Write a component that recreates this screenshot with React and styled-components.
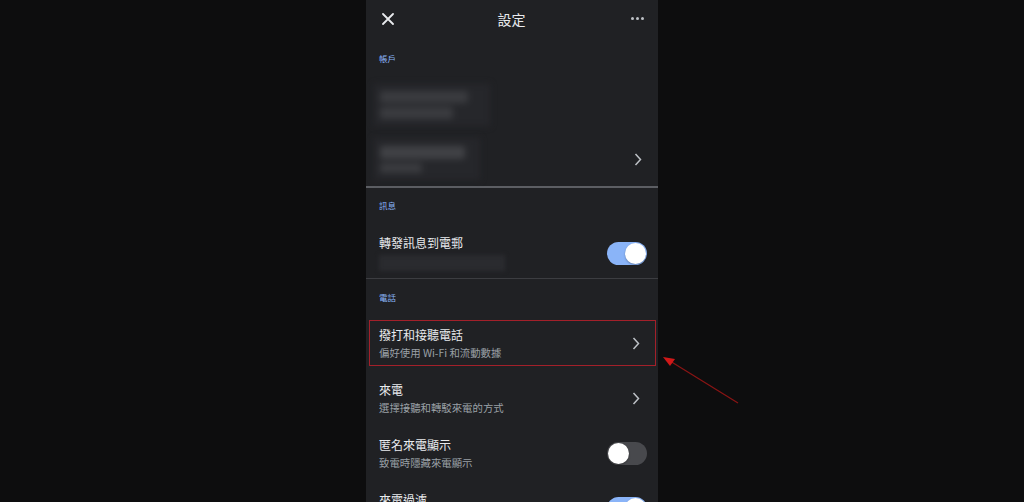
import React from 'react'
import styled, { createGlobalStyle } from 'styled-components'

const GlobalStyle = createGlobalStyle`
  html, body {
    margin: 0;
    padding: 0;
    background: #0d0d0e;
    overflow: hidden;
  }
  body {
    font-family: "Noto Sans CJK TC", "Noto Sans", "Liberation Sans", sans-serif;
  }
`

const Page = styled.div`
  position: relative;
  display: flex;
  justify-content: center;
  width: 1024px;
  height: 502px;
  overflow: hidden;
`

const Panel = styled.div`
  width: 292px;
  height: 502px;
  background: #202124;
  overflow: hidden;
  flex-shrink: 0;
`

const Header = styled.div`
  height: 37px;
  display: flex;
  align-items: center;
  justify-content: space-between;
  padding: 0 14px 0 16px;
  box-sizing: border-box;
`

const Title = styled.div`
  font-size: 14px;
  color: #e8eaed;
  line-height: 18px;
  margin-left: -2px;
`

const IconBtn = styled.div`
  width: 12px;
  height: 12px;
  display: flex;
  align-items: center;
  justify-content: center;
`

const Dots = styled.div`
  display: flex;
  gap: 2px;
  span {
    width: 3px;
    height: 3px;
    border-radius: 50%;
    background: #bdc1c6;
  }
`

const SectionLabel = styled.div`
  font-size: 8.5px;
  line-height: 12px;
  height: 12px;
  color: #8ab4f8;
  padding: 0 13px;
  margin-top: ${p => p.$top}px;
`

const AccountRow = styled.div`
  display: flex;
  align-items: center;
  justify-content: space-between;
  height: ${p => p.$h}px;
  padding: ${p => p.$pt}px 9px ${p => p.$pb}px 8px;
  box-sizing: border-box;
`

const BlurBox = styled.div`
  width: ${p => p.$w}px;
  height: 42px;
  display: flex;
  flex-direction: column;
  gap: 4px;
  justify-content: center;
  padding: 4px 6px;
  box-sizing: border-box;
  background: #26272b;
  filter: blur(3px);
`

const BlurBar = styled.div`
  height: ${p => p.$h}px;
  width: ${p => p.$w}%;
  background: ${p => p.$c || '#3a3b3f'};
  border-radius: 3px;
`

const Divider = styled.div`
  height: ${p => p.$h}px;
  background: ${p => p.$c};
`

const ToggleRow = styled.div`
  display: flex;
  align-items: center;
  justify-content: space-between;
  padding: 24px 11px 7px 13px;
`

const Texts = styled.div`
  display: flex;
  flex-direction: column;
  gap: 3px;
  padding-bottom: ${p => (p.$solo ? 17 : 0)}px;
`

const ItemTitle = styled.div`
  font-size: 12px;
  line-height: 16px;
  color: #e8eaed;
`

const ItemSub = styled.div`
  font-size: 10.4px;
  line-height: 14px;
  color: #9aa0a6;
`

const SubBlur = styled.div`
  width: 126px;
  height: 16px;
  margin-top: 1px;
  background: #2a2b2f;
  filter: blur(2px);
`

const List = styled.div`
  display: flex;
  flex-direction: column;
  gap: 9px;
  margin-top: 17px;
`

const ListRow = styled.div`
  height: 46px;
  margin: 0 2px 0 3px;
  display: flex;
  align-items: center;
  justify-content: space-between;
  padding: 0 8px 0 9px;
  border: 1px solid ${p => (p.$highlight ? '#a3202a' : 'transparent')};
  box-sizing: border-box;
  flex-shrink: 0;
`

const ChevronWrap = styled.div`
  width: 22px;
  display: flex;
  justify-content: center;
`

const Track = styled.div`
  width: 40px;
  height: 23px;
  border-radius: 12px;
  background: ${p => (p.$on ? '#8ab4f8' : '#48494d')};
  display: flex;
  align-items: center;
  justify-content: ${p => (p.$on ? 'flex-end' : 'flex-start')};
  padding: 0 1px;
  box-sizing: border-box;
  flex-shrink: 0;
`

const Thumb = styled.div`
  width: 21px;
  height: 21px;
  border-radius: 50%;
  background: #ffffff;
  box-shadow: 0 1px 2px rgba(0, 0, 0, 0.3);
`

const Arrow = styled.svg`
  position: absolute;
  left: 0;
  top: 0;
  pointer-events: none;
`

const Chevron = () => (
  <svg width="8" height="13" viewBox="0 0 8 13">
    <polyline points="1.5,1 6.5,6.5 1.5,12" fill="none" stroke="#bdc1c6" strokeWidth="1.5" />
  </svg>
)

const Toggle = ({ on }) => (
  <Track $on={on}>
    <Thumb />
  </Track>
)

const rows = [
  { title: '撥打和接聽電話', sub: '偏好使用 Wi-Fi 和流動數據', type: 'chevron', highlight: true },
  { title: '來電', sub: '選擇接聽和轉駁來電的方式', type: 'chevron' },
  { title: '匿名來電顯示', sub: '致電時隱藏來電顯示', type: 'off' },
  { title: '來電過濾', sub: '', type: 'on' },
]

export default function App() {
  return (
    <Page>
      <GlobalStyle />
      <Panel>
        <Header>
          <IconBtn>
            <svg width="12" height="12" viewBox="0 0 12 12">
              <path d="M1 1 L11 11 M11 1 L1 11" stroke="#e8eaed" strokeWidth="1.8" strokeLinecap="round" />
            </svg>
          </IconBtn>
          <Title>設定</Title>
          <Dots>
            <span />
            <span />
            <span />
          </Dots>
        </Header>

        <SectionLabel $top={15}>帳戶</SectionLabel>
        <AccountRow $h={72} $pt={21} $pb={11}>
          <BlurBox $w={116}>
            <BlurBar $h={12} $w={85} />
            <BlurBar $h={12} $w={70} />
          </BlurBox>
        </AccountRow>
        <AccountRow $h={50} $pt={0} $pb={4}>
          <BlurBox $w={106}>
            <BlurBar $h={13} $w={90} $c="#404145" />
            <BlurBar $h={10} $w={45} />
          </BlurBox>
          <ChevronWrap>
            <Chevron />
          </ChevronWrap>
        </AccountRow>
        <Divider $h={2} $c="#5c5e63" />

        <SectionLabel $top={11}>訊息</SectionLabel>
        <ToggleRow>
          <Texts>
            <ItemTitle>轉發訊息到電郵</ItemTitle>
            <SubBlur />
          </Texts>
          <Toggle on />
        </ToggleRow>
        <Divider $h={1} $c="#3c3d41" />

        <SectionLabel $top={12}>電話</SectionLabel>
        <List>
          {rows.map(r => (
            <ListRow key={r.title} $highlight={r.highlight}>
              <Texts $solo={!r.sub}>
                <ItemTitle>{r.title}</ItemTitle>
                {r.sub && <ItemSub>{r.sub}</ItemSub>}
              </Texts>
              {r.type === 'chevron' ? (
                <ChevronWrap>
                  <Chevron />
                </ChevronWrap>
              ) : (
                <Toggle on={r.type === 'on'} />
              )}
            </ListRow>
          ))}
        </List>
      </Panel>

      <Arrow width="1024" height="502" viewBox="0 0 1024 502">
        <line x1="738" y1="403" x2="670" y2="361" stroke="#8a1414" strokeWidth="1.2" />
        <polygon points="663,357 675,359 670,366" fill="#d01818" />
      </Arrow>
    </Page>
  )
}
